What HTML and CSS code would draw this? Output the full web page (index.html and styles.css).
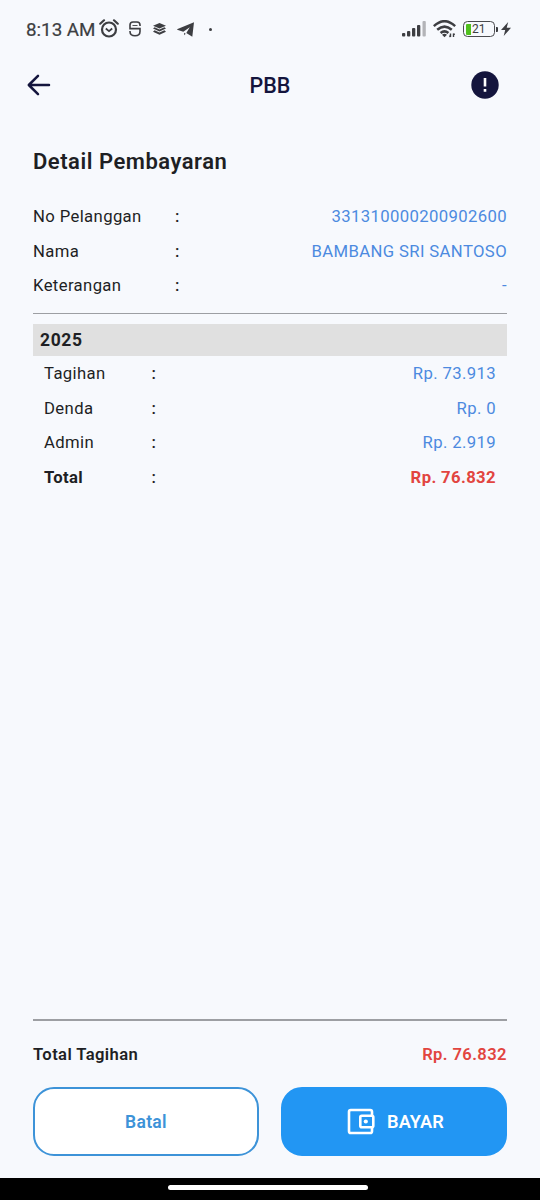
FILE: index.html
```html
<!DOCTYPE html>
<html lang="id">
<head>
<meta charset="utf-8">
<title>PBB</title>
<link rel="stylesheet" href="styles.css">
</head>
<body>
<div class="screen">
  <div class="status">
    <span class="time">8:13 AM</span>
    <svg class="alarm" width="20" height="20" viewBox="0 0 20 20" fill="none" stroke="#3d3e42" stroke-width="2.2"><circle cx="10" cy="10.5" r="7"/><path d="M1.2 4.7 5 1.3M18.8 4.7 15 1.3" stroke-linecap="round"/><path d="m6.8 9.5 3.2 2.6 3.2-2.6" stroke-width="1.8"/></svg>
    <svg class="sapp" width="12" height="16" viewBox="0 0 12 16" fill="none" stroke="#3d3e42" stroke-width="1.6"><path d="M11 5V4Q11 1 8 1H4Q1 1 1 4V7.6H11V10.5Q11 14.8 6 14.8T1 10.5V10"/><path d="M3.5 4.5H8.5" stroke-width=".9"/></svg>
    <svg class="layers" width="13" height="12" viewBox="0 0 13 12" fill="#3d3e42"><path d="M6.5 0 13 2.8 6.5 5.6 0 2.8ZM1.6 4.3 6.5 6.4 11.4 4.3 13 5.5 6.5 8.5 0 5.5ZM1.6 7.3 6.5 9.4 11.4 7.3 13 8.7 6.5 11.7 0 8.7Z"/></svg>
    <svg class="plane" width="18" height="15" viewBox="0 0 18 15" fill="#3d3e42"><path d="M17 .2 15.3 14.8 9.3 10.9 12.8 5.2 6.3 9.8.2 7.7Q0 7.2.6 6.9ZM7 10.7 8.7 11.7 7.3 13.3Z"/></svg>
    <span class="dot"></span>
    <svg class="signal" width="24" height="16" viewBox="0 0 24 16" fill="#3d3e42"><rect x="0" y="12" width="3.3" height="3.4" rx="1"/><rect x="5" y="10" width="3.3" height="5.4" rx="1"/><rect x="10" y="7" width="3.3" height="8.4" rx="1"/><rect x="15" y="4" width="3.3" height="11.4" rx="1"/><rect x="20.5" y="0" width="3.3" height="15.4" rx="1" fill="#b3b4b8"/></svg>
    <svg class="wifi" width="23" height="18" viewBox="0 0 23 18" fill="none" stroke="#3d3e42" stroke-width="2.5"><path d="M.8 6.2Q11.5-3.8 22.2 6.2M4.2 9.8Q11.5 3.4 18.8 9.8M7.6 13Q11.5 9.7 15.4 13"/><path d="m9 14.8 2.5 2.5 2.5-2.5Q11.5 12.8 9 14.8Z" fill="#3d3e42" stroke="none"/><path d="M17.5 13.5v3.5m-1-1.5 1 1.5M20.5 17v-3.5m1 1.5-1-1.5" stroke-width="1.4"/></svg>
    <span class="battery"><i></i><b>21</b></span>
    <span class="cap"></span>
    <svg class="bolt" width="10" height="14" viewBox="0 0 10 14" fill="#3d3e42"><path d="M7.2 0 0 8H4.2L2.7 14 10 5.8H5.7Z"/></svg>
  </div>
  <header class="appbar">
    <svg width="24" height="22" viewBox="0 0 24 22" fill="none" stroke="#14153d" stroke-width="2.5" stroke-linecap="round" stroke-linejoin="round"><path d="M22 11H2M11 1.8 1.8 11 11 20.2"/></svg>
    <h1>PBB</h1>
    <svg width="28" height="28" viewBox="0 0 28 28"><circle cx="14" cy="14" r="13.7" fill="#14153d"/><path d="M12.7 7h2.6v8.5h-2.6ZM12.7 18h2.6v2.7h-2.6Z" fill="#fff"/></svg>
  </header>
  <main class="content">
    <h2>Detail Pembayaran</h2>
    <div class="row"><span class="label">No Pelanggan</span><span class="colon">:</span><span class="value">331310000200902600</span></div>
    <div class="row"><span class="label">Nama</span><span class="colon">:</span><span class="value">BAMBANG SRI SANTOSO</span></div>
    <div class="row"><span class="label">Keterangan</span><span class="colon">:</span><span class="value">-</span></div>
    <div class="rule"></div>
    <div class="year">2025</div>
    <div class="bill">
      <div class="row"><span class="label">Tagihan</span><span class="colon">:</span><span class="value">Rp. 73.913</span></div>
      <div class="row"><span class="label">Denda</span><span class="colon">:</span><span class="value">Rp. 0</span></div>
      <div class="row"><span class="label">Admin</span><span class="colon">:</span><span class="value">Rp. 2.919</span></div>
      <div class="row total"><span class="label">Total</span><span class="colon">:</span><span class="value">Rp. 76.832</span></div>
    </div>
  </main>
  <footer class="footer">
    <div class="rule"></div>
    <div class="sum"><span>Total Tagihan</span><span class="amount">Rp. 76.832</span></div>
    <div class="actions">
      <button class="btn cancel">Batal</button>
      <button class="btn pay">
        <svg width="28" height="27" viewBox="0 0 28 27" fill="none" stroke="#fff" stroke-width="2.6"><path d="M25 7V3.8Q25 2 23.2 2H3.8Q2 2 2 3.8V23.2Q2 25 3.8 25H23.2Q25 25 25 23.2V20"/><rect x="13.3" y="7.7" width="13" height="11.6" rx="1.5"/><circle cx="18.8" cy="13.5" r="2.1" fill="#fff" stroke="none"/></svg>
        <span>BAYAR</span>
      </button>
    </div>
  </footer>
  <div class="navbar"><span></span></div>
</div>
</body>
</html>
```
FILE: styles.css
```css
* { box-sizing: border-box; }
body { margin: 0; background: #f7f9fd; font-family: Roboto, sans-serif; color: #1e1f24; }
.screen { width: 540px; height: 1200px; display: flex; flex-direction: column; }
.status { height: 58px; padding: 0 29px 0 26px; display: flex; align-items: center; color: #3d3e42; }
.time { width: 73px; font-size: 18.8px; line-height: 22px; white-space: nowrap; padding-top: 1px; -webkit-text-stroke: .2px #3d3e42; }
.sapp { margin-left: 10px; }
.layers { margin-left: 12px; }
.plane { margin-left: 11px; }
.dot { width: 3px; height: 3px; border-radius: 50%; background: #3d3e42; margin-left: 14px; }
.signal { margin-left: auto; }
.wifi { margin-left: 7px; }
.battery { width: 32px; height: 16px; margin-left: 7px; border: 1.8px solid #4a4b4f; border-radius: 4.5px; padding: 1px 2px; display: flex; align-items: center; }
.battery i { width: 5px; height: 11px; background: #50c01e; border-radius: 1px 0 0 1px; }
.battery b { font-size: 12px; font-weight: 400; line-height: 12px; margin-left: 1px; }
.cap { width: 2px; height: 5px; margin-left: 1px; background: #3d3e42; border-radius: 0 1px 1px 0; }
.bolt { margin-left: 3px; }
.appbar { height: 54px; padding: 0 41px 0 27px; display: grid; grid-template-columns: 28px 1fr 28px; align-items: center; }
.appbar h1 { margin: 0; padding-left: 14px; text-align: center; font-size: 21.5px; font-weight: 500; color: #14153d; }
.content { flex: 1; padding: 35px 33px 0; }
h2 { margin: 0 0 24px; font-size: 22px; line-height: 30px; font-weight: 600; letter-spacing: .52px; }
.row { display: flex; height: 34.4px; align-items: center; font-size: 16.7px; line-height: 20px; letter-spacing: .37px; }
.content > .row:first-of-type { margin-top: -1px; }
.label { width: 142px; }
.colon { font-weight: 500; }
.value { margin-left: auto; color: #4c8ae0; }
.rule { height: 1.5px; background: #9d9fa3; }
.content .rule { margin-top: 9.5px; }
.year { margin-top: 10px; height: 32px; padding-left: 7px; background: #e0e0e0; font-size: 17.5px; line-height: 33px; font-weight: 700; letter-spacing: .6px; }
.bill { padding: 1px 11px 0; }
.bill .label { width: 107.5px; }
.total .label, .total .value { font-weight: 700; letter-spacing: .36px; }
.total .value, .amount { color: #e24540; }
.footer { padding: 0 33px; height: 159px; }
.sum { display: flex; justify-content: space-between; margin: 23px 0 22px; font-size: 16.6px; line-height: 21px; font-weight: 600; letter-spacing: .4px; }
.actions { display: grid; grid-template-columns: 1fr 1fr; gap: 22px; }
.btn { height: 69px; border-radius: 21px; border: 2px solid #3d93d8; padding: 1px 0 0; background: #fff; color: #3d93d8; display: flex; align-items: center; justify-content: center; font: 600 17.5px/22px Roboto, sans-serif; letter-spacing: .3px; }
.pay { padding-left: 3px; gap: 12px; background: #2296f3; border-color: #2296f3; color: #fff; font-size: 18.2px; letter-spacing: .1px; }
.navbar { height: 22px; background: #000; display: flex; justify-content: center; padding-top: 7px; }
.navbar span { width: 200px; height: 5px; border-radius: 3px; background: #fff; margin-left: -4px; }
```
